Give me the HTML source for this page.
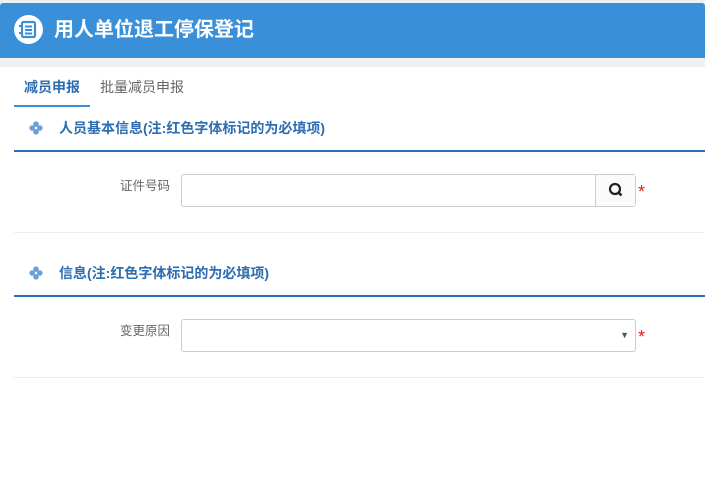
<!DOCTYPE html>
<html><head><meta charset="utf-8"><style>
*{margin:0;padding:0;box-sizing:border-box}
body{width:705px;height:478px;background:#fff;font-family:"Liberation Sans","Noto Sans CJK SC",sans-serif;position:relative;overflow:hidden}
.top{position:absolute;left:0;top:0;width:705px;height:67px;background:#eef0f2}
.hdr{position:absolute;left:0;top:3px;width:705px;height:55px;background:#3a8fd9;border-radius:3px 3px 0 0}
.ic{position:absolute;left:14px;top:15px;width:29px;height:29px;border-radius:50%;background:#fff}
.ttl{position:absolute;left:54px;top:16px;color:#fff;font-size:20px;font-weight:bold;line-height:28px}
.abs{position:absolute}
.tab{font-size:14px;line-height:18px}
.sec{font-size:14px;font-weight:bold;color:#2c6db3;line-height:16px}
.line{position:absolute;left:14px;width:691px;height:2px;background:#2c6db3}
.sep{position:absolute;left:14px;width:691px;height:1px;background:#eceff2}
.lbl{font-size:12.5px;color:#666;line-height:16px}
.inp{position:absolute;left:181px;width:455px;height:33px;border:1px solid #ccc;border-radius:3px;background:#fff}
.star{color:#e02020;font-size:18px}
.dia{position:absolute;width:14px;height:14px}
</style></head><body>
<div class="top"></div>
<div class="hdr"></div>
<div class="ic"><svg width="29" height="29" viewBox="0 0 29 29"><rect x="8" y="7" width="13" height="15" rx="1.5" fill="none" stroke="#3a8fd9" stroke-width="2.2"/><line x1="11" y1="11.5" x2="18" y2="11.5" stroke="#3a8fd9" stroke-width="2"/><line x1="11" y1="15" x2="18" y2="15" stroke="#3a8fd9" stroke-width="2"/><line x1="11" y1="18.5" x2="18" y2="18.5" stroke="#3a8fd9" stroke-width="2"/><line x1="5" y1="11" x2="8" y2="11" stroke="#3a8fd9" stroke-width="2"/><line x1="5" y1="18" x2="8" y2="18" stroke="#3a8fd9" stroke-width="2"/></svg></div>
<div class="ttl">用人单位退工停保登记</div>
<div class="abs tab" style="left:24px;top:78px;color:#2c6db3;font-weight:bold">减员申报</div>
<div class="abs tab" style="left:100px;top:78px;color:#666">批量减员申报</div>
<div class="abs" style="left:14px;top:105px;width:76px;height:2px;background:#3a8fd9"></div>

<svg class="dia" style="left:29px;top:121px" viewBox="0 0 14 14"><circle cx="7" cy="3.2" r="2.8" fill="#6a9fd8"/><circle cx="3.2" cy="7" r="2.8" fill="#6a9fd8"/><circle cx="10.8" cy="7" r="2.8" fill="#6a9fd8"/><circle cx="7" cy="10.8" r="2.8" fill="#6a9fd8"/></svg>
<div class="abs sec" style="left:59px;top:120px">人员基本信息(注:红色字体标记的为必填项)</div>
<div class="line" style="top:150px"></div>
<div class="abs lbl" style="left:120px;top:178px">证件号码</div>
<div class="inp" style="top:174px"><div style="position:absolute;right:0;top:0;width:40px;height:31px;border-left:1px solid #ccc;background:#fafafa"><svg width="40" height="31" viewBox="0 0 40 31"><circle cx="19" cy="14" r="5" fill="none" stroke="#222" stroke-width="2.2"/><line x1="22.5" y1="17.5" x2="25.5" y2="20.5" stroke="#222" stroke-width="2.5"/></svg></div></div>
<div class="abs star" style="left:638px;top:182px">*</div>
<div class="sep" style="top:232px"></div>

<svg class="dia" style="left:29px;top:266px" viewBox="0 0 14 14"><circle cx="7" cy="3.2" r="2.8" fill="#6a9fd8"/><circle cx="3.2" cy="7" r="2.8" fill="#6a9fd8"/><circle cx="10.8" cy="7" r="2.8" fill="#6a9fd8"/><circle cx="7" cy="10.8" r="2.8" fill="#6a9fd8"/></svg>
<div class="abs sec" style="left:59px;top:265px">信息(注:红色字体标记的为必填项)</div>
<div class="line" style="top:295px"></div>
<div class="abs lbl" style="left:120px;top:323px">变更原因</div>
<div class="inp" style="top:319px"><div style="position:absolute;right:6px;top:10px;font-size:9px;color:#555">▼</div></div>
<div class="abs star" style="left:638px;top:327px">*</div>
<div class="sep" style="top:377px"></div>
</body></html>
